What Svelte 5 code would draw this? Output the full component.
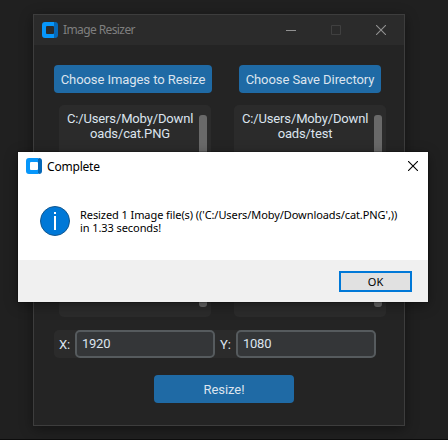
<script>
  const panels = [
    { button: 'Choose Images to Resize', width: 158, lines: ['C:/Users/Moby/Downl', 'oads/cat.PNG'] },
    { button: 'Choose Save Directory', width: 142, lines: ['C:/Users/Moby/Downl', 'oads/test'] }
  ];
  let x = $state('1920');
  let y = $state('1080');
</script>

{#snippet logo()}
  <svg width="16" height="16" viewBox="0 0 16 16">
    <path fill="#0797fb" fill-rule="evenodd" d="M3 0H12.5V16H3Q0 16 0 13V3Q0 0 3 0ZM5 4Q4 4 4 5V11Q4 12 5 12H11Q12 12 12 11V5Q12 4 11 4Z" />
    <path fill="#0568b8" d="M13 0Q16 0 16 3V13Q16 16 13 16L12 15V1Z" />
  </svg>
{/snippet}

{#snippet cross()}
  <svg width="10" height="10" viewBox="0 0 10 10"><path d="M0 0L10 10M10 0L0 10" fill="none" stroke="currentColor" stroke-width="1.1" /></svg>
{/snippet}

<div class="desktop">
  <main class="window">
    <header class="titlebar">
      {@render logo()}
      <span class="title">Image Resizer</span>
      <div class="controls">
        <svg width="10" height="10" viewBox="0 0 10 10"><path d="M0 5.5H10" stroke="#919191" /></svg>
        <svg width="10" height="10" viewBox="0 0 10 10"><path d="M.5 .5H9.5V9.5H.5Z" fill="none" stroke="#404040" /></svg>
        {@render cross()}
      </div>
    </header>
    <div class="columns">
      {#each panels as panel}
        <section>
          <button class="blue" style:width="{panel.width}px"><span>{panel.button}</span></button>
          <div class="list">
            <div class="path">{#each panel.lines as line}<div>{line}</div>{/each}</div>
            <div class="scroll"></div>
          </div>
        </section>
      {/each}
    </div>
    <div class="sizes">
      <label for="x">X:</label><input id="x" bind:value={x} />
      <label for="y">Y:</label><input id="y" bind:value={y} />
    </div>
    <button class="blue resize"><span>Resize!</span></button>
  </main>

  <div class="dialog" role="dialog" aria-label="Complete">
    <header>
      {@render logo()}
      <span class="heading">Complete</span>
      {@render cross()}
    </header>
    <div class="message">
      <svg width="30" height="30" viewBox="0 0 30 30">
        <circle cx="15" cy="15" r="14.5" fill="#0078d7" stroke="#13578f" />
        <path d="M15 10V24" stroke="#fff" stroke-width="2" />
        <rect x="14" y="6" width="2" height="2" fill="#fff" />
      </svg>
      <p>Resized 1 Image file(s) (('C:/Users/Moby/Downloads/cat.PNG',))<br />in 1.33 seconds!</p>
    </div>
    <footer><button class="ok">OK</button></footer>
  </div>
</div>

<style>
  .desktop {
    position: relative;
    box-sizing: border-box;
    width: 448px;
    height: 440px;
    padding: 14px 0 0 33px;
    overflow: hidden;
    background: #202020;
    border-bottom: 1px solid #0c0c0c;
    font: 13px/15px Roboto, sans-serif;
    letter-spacing: -.15px;
    color: #dce4ee;
  }
  svg { display: block; flex: none; }
  button { padding: 0; border: 0; font: inherit; color: inherit; }
  .window {
    box-sizing: border-box;
    width: 372px;
    height: 412px;
    background: #242424;
    border: 1px solid #3d3d3d;
    box-shadow: 0 3px 12px rgba(0, 0, 0, .42);
  }
  .titlebar {
    display: flex;
    align-items: center;
    height: 30px;
    padding: 0 18px 0 8px;
    background: #2b2b2b;
    color: #919191;
  }
  .title { margin-left: 5px; font: 12px/16px "Noto Sans", sans-serif; letter-spacing: -.6px; color: #7f7f7f; }
  .controls { display: flex; gap: 35px; margin-left: auto; }
  .columns { display: flex; gap: 22px; padding: 20px 0 0 20px; }
  section { display: flex; flex-direction: column; align-items: center; width: 152px; }
  section:first-child { align-items: flex-end; width: 158px; }
  section:first-child .list { margin-right: 1px; }
  .blue { height: 28px; border-radius: 4px; background: #1f6aa5; letter-spacing: -.07px; }
  .list {
    display: flex;
    justify-content: space-between;
    box-sizing: border-box;
    width: 152px;
    height: 212px;
    margin-top: 12px;
    padding: 6px 4px 10px 8px;
    border-radius: 5px;
    background: #2b2b2b;
  }
  .path { width: 126px; text-align: center; white-space: nowrap; }
  .scroll { width: 8px; margin-top: 4px; border-radius: 3px; background: #696969; }
  .sizes { display: flex; align-items: center; width: 322px; height: 28px; margin: 13px 0 0 20px; border-radius: 5px; background: #2b2b2b; }
  label { width: 16px; padding-left: 5px; }
  input {
    box-sizing: border-box;
    width: 140px;
    height: 28px;
    padding: 0 0 1px 5px;
    border: 2px solid #565b5e;
    border-radius: 5px;
    background: #343638;
    outline: 0;
    font: inherit;
    letter-spacing: -.25px;
    color: inherit;
  }
  .resize { display: block; width: 140px; margin: 17px 0 0 120px; }

  .dialog {
    position: absolute;
    left: 18px;
    top: 152px;
    width: 410px;
    height: 150px;
    background: #fff;
    box-shadow: 0 0 0 1px rgba(0, 0, 0, .2), 0 3px 12px rgba(0, 0, 0, .4);
    color: #000;
    font-family: "Noto Sans", sans-serif;
  }
  .dialog header { display: flex; align-items: center; height: 28px; padding: 0 10px 0 8px; }
  .heading { margin: 0 auto 0 5px; font-size: 12px; letter-spacing: -.2px; }
  .message { display: flex; box-sizing: border-box; height: 80px; padding: 26px 0 0 22px; }
  p { margin: 2px 0 0 10px; font-size: 11px; line-height: 13px; letter-spacing: -.08px; white-space: nowrap; }
  footer { display: flex; justify-content: flex-end; box-sizing: border-box; height: 42px; padding: 11px 16px 0 0; background: #f0f0f0; }
  .ok { width: 73px; height: 21px; border: 2px solid #0078d7; background: #e1e1e1; font-size: 11px; line-height: 17px; }
</style>
